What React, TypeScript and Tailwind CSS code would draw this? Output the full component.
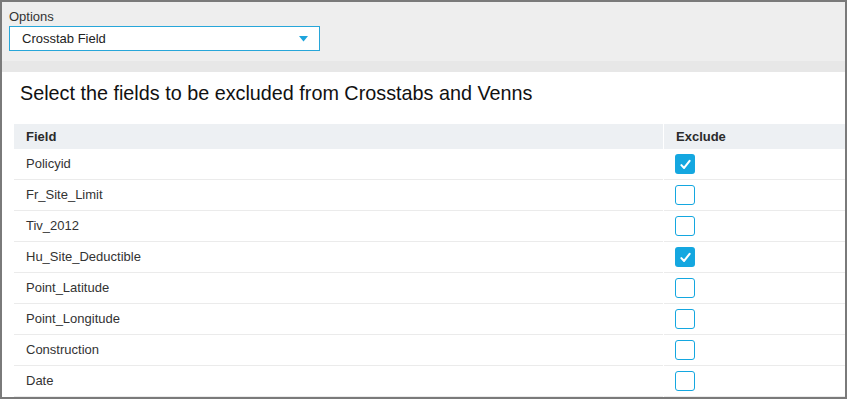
import React from 'react';

interface FieldRow {
  name: string;
  excluded: boolean;
}

const rows: FieldRow[] = [
  { name: 'Policyid', excluded: true },
  { name: 'Fr_Site_Limit', excluded: false },
  { name: 'Tiv_2012', excluded: false },
  { name: 'Hu_Site_Deductible', excluded: true },
  { name: 'Point_Latitude', excluded: false },
  { name: 'Point_Longitude', excluded: false },
  { name: 'Construction', excluded: false },
  { name: 'Date', excluded: false },
];

function Checkbox({ checked }: { checked: boolean }) {
  return checked ? (
    <div className="w-5 h-5 rounded-[3px] bg-[#14a7e0] flex items-center justify-center">
      <svg width="13" height="13" viewBox="0 0 12 12">
        <path d="M2.2 6.6 L4.7 9.2 L9.8 2.6" fill="none" stroke="white" strokeWidth="1.9" strokeLinecap="round" strokeLinejoin="round" />
      </svg>
    </div>
  ) : (
    <div className="w-5 h-5 rounded-[3px] border border-[#14a7e0] bg-white" />
  );
}

export default function App() {
  return (
    <div
      className="w-[847px] h-[399px] border-2 border-[#7a7a7a] bg-white flex flex-col overflow-hidden"
      style={{ fontFamily: '"Liberation Sans", Arial, sans-serif' }}
    >
      {/* Options panel */}
      <div className="bg-[#eeeeee] h-[59px] pl-[7px] pt-[7px]">
        <div className="text-[13px] leading-[15px] text-[#333]">Options</div>
        <div className="mt-[2px] w-[311px] h-[25px] border border-[#27a6d9] bg-white flex items-center justify-between pl-[12px] pr-[11px]">
          <span className="text-[13px] text-[#222]">Crosstab Field</span>
          <svg width="9" height="6" viewBox="0 0 9 6">
            <path d="M0 0 H9 L4.5 5.5 Z" fill="#1ea4dc" />
          </svg>
        </div>
      </div>
      <div className="bg-[#e7e7e7] h-[11px]" />

      {/* Content */}
      <div className="pl-[18px] pt-[9px]">
        <h1 className="text-[19.8px] leading-[24px] text-[#111]">
          Select the fields to be excluded from Crosstabs and Venns
        </h1>
      </div>

      <div className="ml-[12px] mt-[19px] flex flex-col text-[13px] text-[#333]">
        <div className="flex h-[25px]">
          <div className="w-[649px] bg-[#edf0f3] pl-[12px] flex items-center font-bold text-[#2b2b2b]">Field</div>
          <div className="flex-1 ml-px bg-[#edf0f3] pl-[12px] flex items-center font-bold text-[#2b2b2b]">Exclude</div>
        </div>
        {rows.map((row) => (
          <div key={row.name} className="flex h-[31px]">
            <div className="w-[649px] border-b border-[#ebebeb] pl-[12px] flex items-center">{row.name}</div>
            <div className="flex-1 ml-px border-b border-[#ebebeb] pl-[11px] flex items-center">
              <Checkbox checked={row.excluded} />
            </div>
          </div>
        ))}
      </div>
    </div>
  );
}
